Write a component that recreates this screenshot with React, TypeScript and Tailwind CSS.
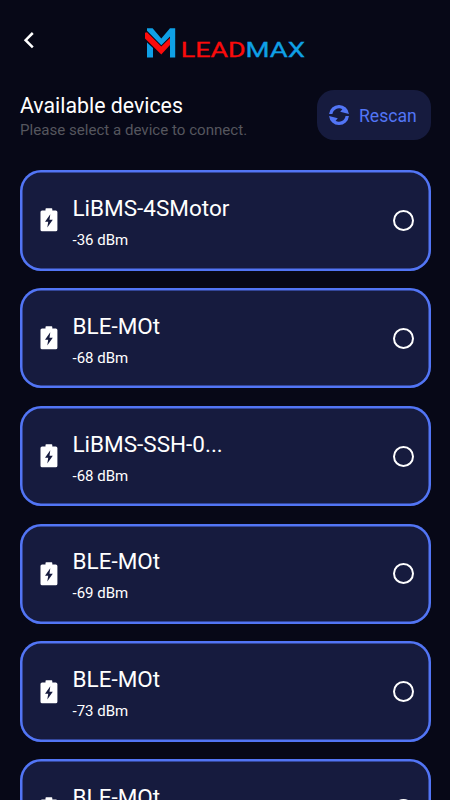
interface IDevice {
  name: string
  rssi: number
}

const devices: IDevice[] = [
  { name: "LiBMS-4SMotor", rssi: -36 },
  { name: "BLE-MOt", rssi: -68 },
  { name: "LiBMS-SSH-0...", rssi: -68 },
  { name: "BLE-MOt", rssi: -69 },
  { name: "BLE-MOt", rssi: -73 },
  { name: "BLE-MOt", rssi: -75 },
]

const Logo = () => {
  return (
    <svg width="162" height="40" viewBox="0 0 162 40" className="block">
      <path d="M3 2.2H8.6L17.3 12.5L26 2.2H31.2V31.5H26V10.5L17.3 19.3L3 4.8Z" fill="#0fa0e6" />
      <path d="M3 16.4L9 22V31.5H3Z" fill="#0fa0e6" />
      <path d="M1 6.8L3 6.3L17.3 20.6L26 12V18.9L17.3 28.4L1 12.6Z" fill="#fb0b0b" />
      <g className="font-['Roboto'] font-normal" fontSize="19.8" strokeWidth=".3">
        <text x="36.8" y="31.3" textLength="64.8" lengthAdjust="spacingAndGlyphs" fill="#fb0b0b" stroke="#fb0b0b">LEAD</text>
        <text x="101.5" y="31.3" textLength="59.5" lengthAdjust="spacingAndGlyphs" fill="#0fa0e6" stroke="#0fa0e6">MAX</text>
      </g>
    </svg>
  )
}

const RescanIcon = () => {
  return (
    <svg width="20" height="20" viewBox="0 0 20 20" fill="#5275f5" className="block shrink-0">
      <path d="M.05 9A10 10 0 0 1 19.95 9L11.2 6.8L13.4 4.2A6.7 6.7 0 0 0 3.4 9Z" />
      <path d="M19.95 11A10 10 0 0 1 .05 11L8.8 13.2L6.6 15.8A6.7 6.7 0 0 0 16.6 11Z" />
    </svg>
  )
}

const BatteryIcon = () => {
  return (
    <svg width="18" height="24" viewBox="0 0 18 24" className="block shrink-0">
      <path d="M5.5 1Q5.5 .3 6.2 .3H11.6Q12.3 .3 12.3 1V2.4H15.8Q17.4 2.4 17.4 4V21.7Q17.4 23.3 15.8 23.3H2.1Q.5 23.3 .5 21.7V4Q.5 2.4 2.1 2.4H5.5Z" fill="#fff" />
      <path d="M10.3 6.3L5 13.7H8.2L7.3 19.4L12.8 11.7H9.5Z" fill="#161b3e" />
    </svg>
  )
}

const DeviceCard = ({ name, rssi }: IDevice) => {
  return (
    <div className="flex h-[100.4px] w-[410.5px] shrink-0 items-center rounded-[21px] bg-[#161b3e] pl-5 pr-[17px] shadow-[inset_0_0_0_2.5px_#5275f5]">
      <BatteryIcon />
      <div className="flex flex-1 flex-col pl-[14.5px] pt-[5px]">
        <h2 className="text-[22.5px] leading-[28px] text-white">{name}</h2>
        <p className="mt-[6px] text-[15px] leading-[24px] text-white">{rssi} dBm</p>
      </div>
      <div className="size-[21px] rounded-full border-2 border-white" />
    </div>
  )
}

const App = () => {
  return (
    <div className="h-[800px] w-[450px] overflow-hidden bg-[#070817] font-['Roboto',sans-serif]">
      <header className="flex h-[90px] items-start pl-[23px] pt-[26px]">
        <svg width="12" height="18" viewBox="0 0 12 18" fill="none" className="mt-[5px] block">
          <path d="M9.8 2L2.6 9.2L9.8 16.4" stroke="#fff" strokeWidth="2.5" />
        </svg>
        <div className="ml-[109px]">
          <Logo />
        </div>
      </header>
      <div className="flex h-[80.3px] items-start justify-between pl-5 pr-[19.5px]">
        <div>
          <h1 className="mt-[3px] text-[21.3px] leading-[26px] text-white">Available devices</h1>
          <p className="text-[15.1px] leading-[22px] text-[#55565e]">Please select a device to connect.</p>
        </div>
        <button className="flex h-[50px] w-[114px] items-center gap-[10px] rounded-[17px] bg-[#161b3e] pl-[12.5px] text-[17.6px] text-[#5275f5]">
          <RescanIcon />
          <span className="pt-[2px]">Rescan</span>
        </button>
      </div>
      <main className="flex flex-col gap-[17.4px] pl-5">
        {devices.map((device, index) => (
          <DeviceCard key={index} {...device} />
        ))}
      </main>
    </div>
  )
}

export default App
